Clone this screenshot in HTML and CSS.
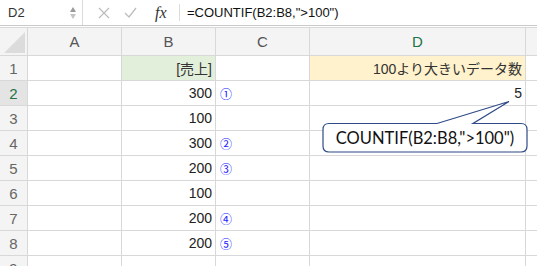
FILE: index.html
```html
<!DOCTYPE html>
<html lang="ja">
<head>
  <meta charset="UTF-8" />
  <title>COUNTIF</title>
  <link rel="stylesheet" href="styles.css">
</head>
<body>
  <div class="formula-bar">
    <div class="name-box">D2</div>
    <div class="stepper"><span class="up"></span><span class="down"></span></div>
    <div class="bar-icons">
      <svg width="12" height="12" viewBox="0 0 12 12"><path d="M1 1 L11 11 M11 1 L1 11" stroke="#bdbdbd" stroke-width="1.3" fill="none"/></svg>
      <svg width="13" height="11" viewBox="0 0 13 11"><path d="M1 6 L5 10 L12 1" stroke="#bdbdbd" stroke-width="1.3" fill="none"/></svg>
      <span class="fx">fx</span>
    </div>
    <div class="formula">=COUNTIF(B2:B8,"&gt;100")</div>
  </div>

  <div class="sheet">
    <div class="corner"><span class="tri"></span></div>
    <div class="col-head">A</div>
    <div class="col-head">B</div>
    <div class="col-head">C</div>
    <div class="col-head active">D</div>
    <div class="col-head"></div>

    <div class="row-head">1</div>
    <div class="cell"></div>
    <div class="cell num green">[売上]</div>
    <div class="cell"></div>
    <div class="cell num yellow">100より大きいデータ数</div>
    <div class="cell"></div>

    <div class="row-head active">2</div>
    <div class="cell"></div>
    <div class="cell num">300</div>
    <div class="cell mark">①</div>
    <div class="cell num top">5</div>
    <div class="cell"></div>

    <div class="row-head">3</div>
    <div class="cell"></div>
    <div class="cell num">100</div>
    <div class="cell"></div>
    <div class="cell"></div>
    <div class="cell"></div>

    <div class="row-head">4</div>
    <div class="cell"></div>
    <div class="cell num">300</div>
    <div class="cell mark">②</div>
    <div class="cell"></div>
    <div class="cell"></div>

    <div class="row-head">5</div>
    <div class="cell"></div>
    <div class="cell num">200</div>
    <div class="cell mark">③</div>
    <div class="cell"></div>
    <div class="cell"></div>

    <div class="row-head">6</div>
    <div class="cell"></div>
    <div class="cell num">100</div>
    <div class="cell"></div>
    <div class="cell"></div>
    <div class="cell"></div>

    <div class="row-head">7</div>
    <div class="cell"></div>
    <div class="cell num">200</div>
    <div class="cell mark">④</div>
    <div class="cell"></div>
    <div class="cell"></div>

    <div class="row-head">8</div>
    <div class="cell"></div>
    <div class="cell num">200</div>
    <div class="cell mark">⑤</div>
    <div class="cell"></div>
    <div class="cell"></div>

    <div class="row-head">9</div>
    <div class="cell"></div>
    <div class="cell"></div>
    <div class="cell"></div>
    <div class="cell"></div>
    <div class="cell"></div>
  </div>

  <!-- callout over the sheet -->
  <div class="callout">
    <svg width="208" height="54" viewBox="0 0 208 54">
      <path d="M115 23.5 L187 1.5 L151 23.5 H199 Q205 23.5 205 29.5 V46 Q205 52 199 52 H7 Q1 52 1 46 V29.5 Q1 23.5 7 23.5 Z" fill="#fff" stroke="#2f4b87" stroke-width="1.2"/>
    </svg>
    <div class="callout-text">COUNTIF(B2:B8,"&gt;100")</div>
  </div>
</body>
</html>
```

FILE: styles.css
```css
body {
  margin: 0;
  width: 537px;
  height: 266px;
  overflow: hidden;
  position: relative;
  background: #fff;
  font-family: "Liberation Sans", "Noto Sans CJK JP", sans-serif;
}
.formula-bar {
  height: 25px;
  border-bottom: 1px solid #c9c9c9;
  margin-bottom: 1px;
  display: flex;
  align-items: center;
  font-size: 13px;
  color: #222;
}
.name-box {
  width: 60px;
  padding-left: 8px;
  color: #333;
}
.stepper {
  width: 10px;
  height: 25px;
  display: flex;
  flex-direction: column;
  justify-content: center;
  align-items: center;
  gap: 2px;
  border-right: 1px solid #dcdcdc;
  padding-right: 4px;
}
.stepper .up {
  border-left: 3px solid transparent;
  border-right: 3px solid transparent;
  border-bottom: 5px solid #9a9a9a;
}
.stepper .down {
  border-left: 3px solid transparent;
  border-right: 3px solid transparent;
  border-top: 5px solid #c4c4c4;
}
.bar-icons {
  display: flex;
  align-items: center;
  gap: 14px;
  padding-left: 15px;
  width: 81px;
  height: 17px;
  border-right: 1px solid #dcdcdc;
  margin-right: 7px;
}
.fx {
  font-family: "Liberation Serif", serif;
  font-style: italic;
  font-size: 16px;
  color: #333;
  line-height: 17px;
  margin-left: 4px;
}
.formula {
  color: #111;
}
.sheet {
  display: grid;
  grid-template-columns: 27px 93px 93px 93px 215px 1fr;
  grid-template-rows: 27px;
  grid-auto-rows: 24px;
  gap: 1px;
  background: #d8d8d8;
  border-top: 1px solid #d8d8d8;
  font-size: 14px;
}
.corner {
  background: #f4f4f4;
  position: relative;
}
.corner .tri {
  position: absolute;
  right: 2px;
  bottom: 2px;
  border-left: 21px solid transparent;
  border-bottom: 21px solid #dcdcdc;
}
.col-head {
  background: #f4f4f4;
  color: #555;
  display: flex;
  align-items: center;
  justify-content: center;
  font-size: 15px;
}
.col-head.active {
  color: #217346;
}
.row-head {
  background: #f4f4f4;
  color: #666;
  display: flex;
  align-items: center;
  justify-content: center;
  font-size: 15px;
}
.row-head.active {
  background: #e4e4e4;
  color: #217346;
}
.cell {
  background: #fff;
  display: flex;
  align-items: center;
  color: #222;
}
.num {
  justify-content: flex-end;
  padding-right: 3px;
}
.top {
  align-items: flex-start;
  padding-top: 4px;
}
.green {
  background: #e2efda;
  color: #333;
}
.yellow {
  background: #fff2cc;
  color: #333;
}
.mark {
  color: #1a1aff;
  font-size: 12px;
  padding-left: 4px;
  font-family: "Noto Sans CJK JP", sans-serif;
}
.callout {
  position: absolute;
  left: 322px;
  top: 100px;
  width: 208px;
  height: 54px;
}
.callout svg {
  display: block;
}
.callout-text {
  position: absolute;
  left: 1px;
  top: 23px;
  width: 204px;
  height: 29px;
  display: flex;
  align-items: center;
  justify-content: center;
  font-family: Lato, sans-serif;
  font-size: 16.5px;
  color: #111;
}
```
